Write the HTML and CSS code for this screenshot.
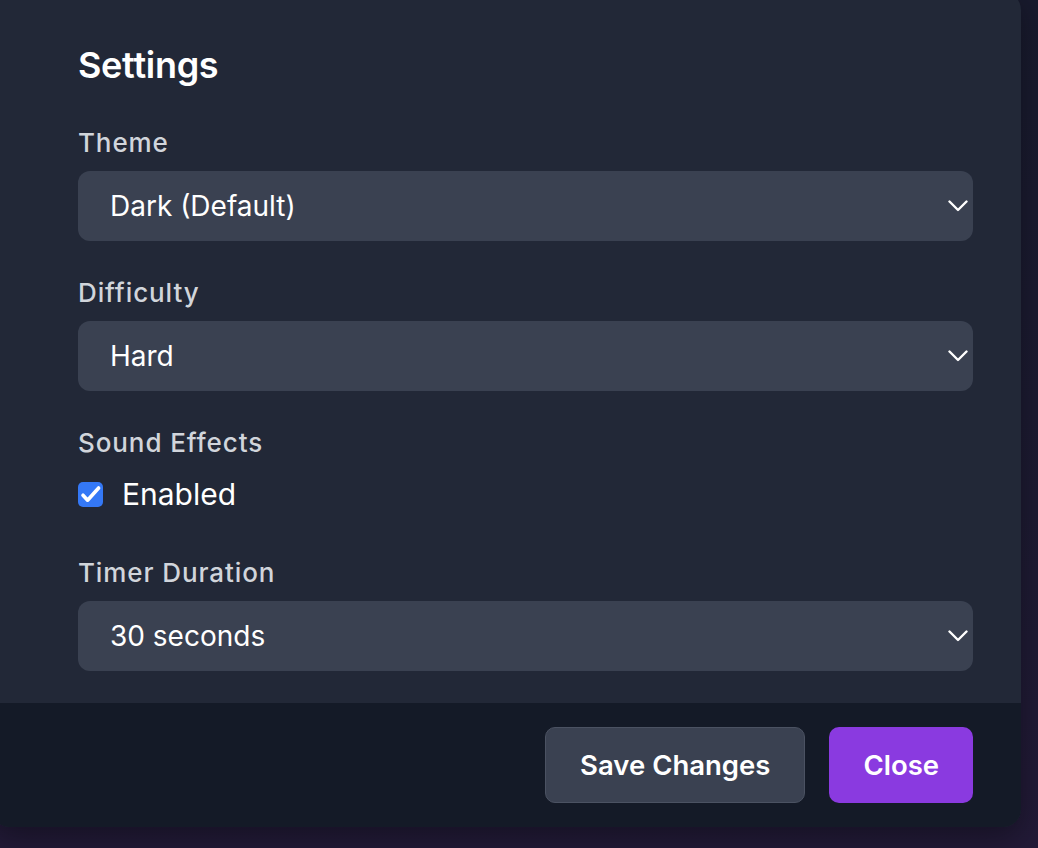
FILE: index.html
```html
<!DOCTYPE html>
<html lang="en">
<head>
<meta charset="utf-8">
<title>Settings</title>
<link rel="stylesheet" href="styles.css">
</head>
<body>
<div class="backdrop">
  <div class="modal">
    <div class="modal-body">
      <h2 class="title">Settings</h2>
      <div class="field">
        <label class="label">Theme</label>
        <div class="select"><span>Dark (Default)</span><svg class="chev" viewBox="0 0 20 12" width="20" height="12"><path d="M1.5 1.5 L10 10 L18.5 1.5" fill="none" stroke="#fff" stroke-width="2.4" stroke-linecap="round" stroke-linejoin="round"/></svg></div>
      </div>
      <div class="field">
        <label class="label">Difficulty</label>
        <div class="select"><span>Hard</span><svg class="chev" viewBox="0 0 20 12" width="20" height="12"><path d="M1.5 1.5 L10 10 L18.5 1.5" fill="none" stroke="#fff" stroke-width="2.4" stroke-linecap="round" stroke-linejoin="round"/></svg></div>
      </div>
      <div class="field field-check">
        <label class="label">Sound Effects</label>
        <div class="check-row">
          <span class="checkbox"><svg viewBox="0 0 25 25" width="25" height="25"><path d="M5 13.2 L9.6 18.2 L20.6 6" fill="none" stroke="#fff" stroke-width="3.6" stroke-linecap="round" stroke-linejoin="round"/></svg></span>
          <span class="check-text">Enabled</span>
        </div>
      </div>
      <div class="field last">
        <label class="label">Timer Duration</label>
        <div class="select"><span>30 seconds</span><svg class="chev" viewBox="0 0 20 12" width="20" height="12"><path d="M1.5 1.5 L10 10 L18.5 1.5" fill="none" stroke="#fff" stroke-width="2.4" stroke-linecap="round" stroke-linejoin="round"/></svg></div>
      </div>
    </div>
    <div class="modal-footer">
      <button class="btn btn-secondary">Save Changes</button>
      <button class="btn btn-primary">Close</button>
    </div>
  </div>
</div>
</body>
</html>
```
FILE: styles.css
```css
* { box-sizing: border-box; }
html, body { margin: 0; padding: 0; height: 100%; }
body {
  font-family: Inter, "Noto Sans", "Liberation Sans", sans-serif;
  background: linear-gradient(180deg, #181a2d 0%, #1d1a32 60%, #221a37 100%);
  overflow: hidden;
  color: #fff;
}
.backdrop {
  width: 1038px;
  height: 848px;
}
.modal {
  margin-left: -8px;
  margin-top: -8px;
  width: 1029px;
  border-radius: 18px;
  overflow: hidden;
  background: #222837;
  display: flex;
  flex-direction: column;
  box-shadow: 0 10px 30px rgba(0,0,0,0.35);
}
.modal-body {
  padding: 49px 48px 32px 86px;
}
.title {
  margin: 0 0 36px 0;
  font-size: 36px;
  line-height: 48px;
  font-weight: 600;
  letter-spacing: -0.3px;
  color: #fff;
}
.field {
  display: flex;
  flex-direction: column;
  margin-bottom: 34px;
}
.field.field-check { margin-bottom: 38px; }
.field.last { margin-bottom: 0; }
.label {
  font-size: 26px;
  line-height: 36px;
  font-weight: 500;
  letter-spacing: 0.9px;
  color: #d1d5db;
  margin-bottom: 10px;
}
.select {
  height: 70px;
  border-radius: 12px;
  background: #3a4151;
  display: flex;
  align-items: center;
  justify-content: space-between;
  padding: 0 5px 0 32px;
  font-size: 28px;
  color: #fff;
}
.chev { display: block; }
.check-row {
  display: flex;
  align-items: center;
  height: 46px;
  gap: 19px;
}
.checkbox {
  width: 25px;
  height: 25px;
  border-radius: 5px;
  background: #3478f6;
  display: block;
}
.checkbox svg { display: block; }
.check-text {
  font-size: 30px;
  color: #fff;
}
.modal-footer {
  background: #141a27;
  display: flex;
  justify-content: flex-end;
  gap: 24px;
  padding: 24px 48px 24px 48px;
}
.btn {
  height: 76px;
  border-radius: 10px;
  font-family: inherit;
  font-size: 27.5px;
  font-weight: 600;
  color: #fff;
  padding: 0 34px;
  cursor: pointer;
}
.btn-secondary {
  background: #3a4151;
  border: 1.5px solid #4b5262;
}
.btn-primary {
  background: #8a3ae0;
  border: none;
}
```
